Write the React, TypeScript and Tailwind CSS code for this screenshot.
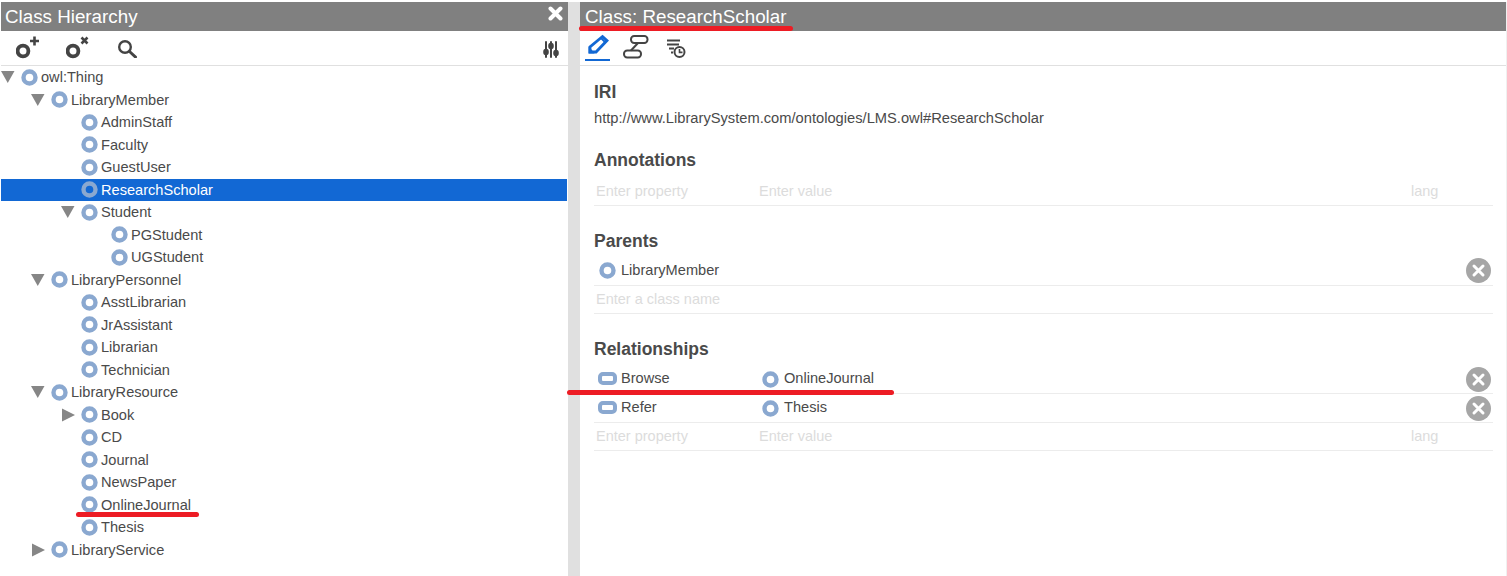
import React from 'react';

const FONT = "font-['Liberation_Sans',Arial,sans-serif]";

type TreeRow = {
    label: string;
    depth: number;
    arrow?: 'open' | 'closed';
    selected?: boolean;
};

const rows: TreeRow[] = [
    { label: 'owl:Thing', depth: 0, arrow: 'open' },
    { label: 'LibraryMember', depth: 1, arrow: 'open' },
    { label: 'AdminStaff', depth: 2 },
    { label: 'Faculty', depth: 2 },
    { label: 'GuestUser', depth: 2 },
    { label: 'ResearchScholar', depth: 2, selected: true },
    { label: 'Student', depth: 2, arrow: 'open' },
    { label: 'PGStudent', depth: 3 },
    { label: 'UGStudent', depth: 3 },
    { label: 'LibraryPersonnel', depth: 1, arrow: 'open' },
    { label: 'AsstLibrarian', depth: 2 },
    { label: 'JrAssistant', depth: 2 },
    { label: 'Librarian', depth: 2 },
    { label: 'Technician', depth: 2 },
    { label: 'LibraryResource', depth: 1, arrow: 'open' },
    { label: 'Book', depth: 2, arrow: 'closed' },
    { label: 'CD', depth: 2 },
    { label: 'Journal', depth: 2 },
    { label: 'NewsPaper', depth: 2 },
    { label: 'OnlineJournal', depth: 2 },
    { label: 'Thesis', depth: 2 },
    { label: 'LibraryService', depth: 1, arrow: 'closed' },
];

const ClassDot = () => (
    <svg width="17" height="17" viewBox="0 0 17 17" className="block shrink-0">
        <circle cx="8.5" cy="8.5" r="6" fill="none" stroke="#8aa8d0" strokeWidth="4.4" />
    </svg>
);

const PropertyPill = () => (
    <span className="block w-[19px] h-[13px] shrink-0 rounded-[5px] border-[4px] border-[#8aa8d0]" />
);

const Arrow = ({ dir }: { dir: 'open' | 'closed' }) => (
    <svg width="14" height="14" viewBox="0 0 14 14" className="block">
        {dir === 'open' ? <path d="M0 1h13.5L6.75 13z" fill="#868686" /> : <path d="M1 .5 14 7 1 13.5z" fill="#868686" />}
    </svg>
);

const RemoveButton = () => (
    <svg width="25" height="25" viewBox="0 0 25 25" className="block">
        <circle cx="12.5" cy="12.5" r="12.5" fill="#a6a6a6" />
        <path d="M8 8l9 9M17 8l-9 9" stroke="#fff" strokeWidth="3" strokeLinecap="round" />
    </svg>
);

const Underline = ({ className }: { className: string }) => (
    <div className={`absolute h-[5px] rounded-full bg-[#ed1c24] ${className}`} />
);

const TreeView = () => (
    <div className="flex flex-col">
        {rows.map((row) => (
            <div
                key={row.label}
                className={`flex items-center h-[22.5px] text-[14.6px] mr-[1px] ${row.selected ? 'bg-[#1268d4] text-white' : 'text-[#4a4a4a]'}`}
            >
                {/* indent is 30px per level */}
                <div className={row.depth === 0 ? 'w-0' : row.depth === 1 ? 'w-[30px]' : row.depth === 2 ? 'w-[60px]' : 'w-[90px]'} />
                <div className="w-[20px] shrink-0 flex items-center">{row.arrow && <Arrow dir={row.arrow} />}</div>
                <ClassDot />
                <span className="ml-[3px] pt-[1.5px]">{row.label}</span>
            </div>
        ))}
    </div>
);

const FormLine = ({ children }: { children: React.ReactNode }) => (
    <div className="flex items-center border-b border-[#ececec]">{children}</div>
);

const Placeholder = ({ children, className = '' }: { children: React.ReactNode; className?: string }) => (
    <span className={`text-[14.5px] text-[#dcdcdc] ${className}`}>{children}</span>
);

const PropertyInputs = () => (
    <>
        <Placeholder className="ml-[2px] w-[163px]">Enter property</Placeholder>
        <Placeholder className="w-[652px]">Enter value</Placeholder>
        <Placeholder>lang</Placeholder>
    </>
);

const App: React.FC = () => {
    return (
        <div className={`relative w-[1507px] h-[576px] overflow-hidden bg-white pt-[2px] flex ${FONT}`}>
            {/* Class hierarchy */}
            <div className="w-[568px] pl-[1px] flex flex-col shrink-0">
                <div className="relative h-[29px] bg-[#808080] pl-[4px] pt-[2px] flex items-center text-white text-[18.8px]">
                    Class Hierarchy
                    <svg width="15" height="15" viewBox="0 0 15 15" className="absolute right-[5px] top-[4px]">
                        <path d="M2.5 2.5l10 10M12.5 2.5l-10 10" stroke="#fff" strokeWidth="4" strokeLinecap="round" />
                    </svg>
                </div>
                <div className="h-[35px] flex items-center border-b border-[#e0e0e0] pl-[15px] pr-[8px]">
                    <svg width="24" height="24" viewBox="0 0 24 24" className="block">
                        <circle cx="7" cy="15" r="5.4" fill="none" stroke="#444" strokeWidth="3.8" />
                        <path d="M18.5 .5v9M14 5h9" stroke="#444" strokeWidth="2.6" />
                    </svg>
                    <svg width="24" height="24" viewBox="0 0 24 24" className="block ml-[26px]">
                        <circle cx="7" cy="15" r="5.4" fill="none" stroke="#444" strokeWidth="3.8" />
                        <path d="M15.5 1.5l6 6M21.5 1.5l-6 6" stroke="#444" strokeWidth="2.6" />
                    </svg>
                    <svg width="20" height="20" viewBox="0 0 20 20" className="block ml-[28px]">
                        <circle cx="7" cy="9" r="5.8" fill="none" stroke="#444" strokeWidth="2.4" />
                        <path d="M11.5 13.5 17.5 19" stroke="#444" strokeWidth="3" strokeLinecap="round" />
                    </svg>
                    <svg width="17" height="20" viewBox="0 0 17 20" className="block ml-auto">
                        <path d="M3 4v15M8 4v15M13 4v15" stroke="#444" strokeWidth="2" strokeLinecap="round" />
                        <ellipse cx="3" cy="14" rx="2.8" ry="3.2" fill="#444" />
                        <ellipse cx="8" cy="8" rx="2.8" ry="3.2" fill="#444" />
                        <ellipse cx="13" cy="15" rx="2.8" ry="3.2" fill="#444" />
                    </svg>
                </div>
                <TreeView />
            </div>

            {/* Splitter */}
            <div className="w-[12px] shrink-0 bg-[#e0e0e0]" />

            {/* Class detail */}
            <div className="flex-1 flex flex-col border-r border-[#f0f0f0]">
                <div className="h-[29px] bg-[#808080] pl-[5px] pt-[2px] flex items-center text-white text-[18.8px]">Class: ResearchScholar</div>
                <div className="h-[35px] flex items-end border-b border-[#e0e0e0] pl-[5px]">
                    <div className="w-[25px] h-[27px] mb-[4px] border-b-2 border-[#1268d4] flex justify-center">
                        <svg width="22" height="20" viewBox="0 0 22 20" className="block">
                            <path d="M15.5 2.5l4.5 4-11 11.5H3v-5z" fill="none" stroke="#1268d4" strokeWidth="2.8" />
                            <path d="M1.5 19.5v-7l3 3 3 4z" fill="#1268d4" />
                            <path d="M13.5 3.5l5 5" stroke="#1268d4" strokeWidth="2" />
                        </svg>
                    </div>
                    <svg width="26" height="26" viewBox="0 0 26 26" className="block ml-[13px] mb-[4px]">
                        <rect x="8" y="1" width="16.5" height="7" rx="3.2" fill="none" stroke="#444" strokeWidth="2" />
                        <rect x="1" y="15.5" width="17" height="7" rx="3.2" fill="none" stroke="#444" strokeWidth="2" />
                        <path d="M15 8 8 15.5" stroke="#444" strokeWidth="2" />
                    </svg>
                    <svg width="20" height="20" viewBox="0 0 20 20" className="block ml-[17px] mb-[7px]">
                        <path d="M1 2.5h13M1 6.5h12M3 10.5h5M5 14.5h2" stroke="#444" strokeWidth="1.8" />
                        <circle cx="13.5" cy="14" r="5" fill="#fff" stroke="#444" strokeWidth="2" />
                        <path d="M13.5 11v3.4h3" fill="none" stroke="#444" strokeWidth="1.6" />
                    </svg>
                </div>

                <div className="pl-[14px] pr-[13px] flex flex-col text-[#4a4a4a]">
                    <h2 className="mt-[14px] text-[17.5px] leading-[24px] font-bold">IRI</h2>
                    <p className="mt-[4px] text-[14.7px] leading-[20px]">http://www.LibrarySystem.com/ontologies/LMS.owl#ResearchScholar</p>

                    <h2 className="mt-[20px] text-[17.5px] leading-[24px] font-bold">Annotations</h2>
                    <div className="mt-[5px] h-[29px]">
                        <FormLine>
                            <div className="h-[28px] pt-[2px] flex items-center w-full">
                                <PropertyInputs />
                            </div>
                        </FormLine>
                    </div>

                    <h2 className="mt-[23px] text-[17.5px] leading-[24px] font-bold">Parents</h2>
                    <div className="mt-[3px]">
                        <FormLine>
                            <div className="h-[29px] flex items-center w-full pl-[5px] text-[14.6px]">
                                <ClassDot />
                                <span className="ml-[5px]">LibraryMember</span>
                                <div className="ml-auto mr-[2px]"><RemoveButton /></div>
                            </div>
                        </FormLine>
                        <FormLine>
                            <div className="h-[27px] flex items-center w-full">
                                <Placeholder className="ml-[2px]">Enter a class name</Placeholder>
                            </div>
                        </FormLine>
                    </div>

                    <h2 className="mt-[23px] text-[17.5px] leading-[24px] font-bold">Relationships</h2>
                    <div className="mt-[4px]">
                        {[
                            ['Browse', 'OnlineJournal'],
                            ['Refer', 'Thesis'],
                        ].map(([prop, value]) => (
                            <FormLine key={prop}>
                                <div className="h-[28px] flex items-center w-full text-[14.6px]">
                                    <div className="w-[168px] pl-[4px] flex items-center">
                                        <PropertyPill />
                                        <span className="ml-[4px]">{prop}</span>
                                    </div>
                                    <ClassDot />
                                    <span className="ml-[5px]">{value}</span>
                                    <div className="ml-auto mr-[2px]"><RemoveButton /></div>
                                </div>
                            </FormLine>
                        ))}
                        <FormLine>
                            <div className="h-[27px] flex items-center w-full">
                                <PropertyInputs />
                            </div>
                        </FormLine>
                    </div>
                </div>
            </div>

            {/* Annotation marks drawn on top of the screenshot */}
            <Underline className="left-[76px] top-[512px] w-[123px]" />
            <Underline className="left-[579px] top-[26px] w-[214px]" />
            <Underline className="left-[567px] top-[390px] w-[327px]" />
        </div>
    );
};

export default App;
